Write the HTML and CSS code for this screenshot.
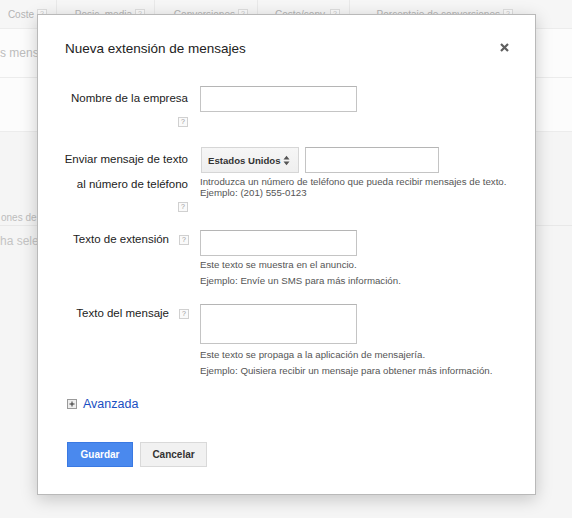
FILE: index.html
```html
<!DOCTYPE html>
<html lang="es">
<head>
<meta charset="utf-8">
<title>Nueva extensión de mensajes</title>
<link rel="stylesheet" href="styles.css">
</head>
<body>
<div class="page">
  <div class="thead">
    <div class="th c1">Coste <span class="q">?</span></div>
    <div class="th c2">Posic. media <span class="q">?</span></div>
    <div class="th c3">Conversiones <span class="q">?</span></div>
    <div class="th c4">Coste/conv. <span class="q">?</span></div>
    <div class="th c5">Porcentaje de conversiones <span class="q">?</span></div>
  </div>
  <div class="trow r1"><span class="bgtext">s mensa</span></div>
  <div class="trow r2"></div>
  <div class="lower">
    <div class="l1">ones de</div>
    <div class="l2">ha sele</div>
  </div>
</div>

<div class="dialog">
  <div class="dlg-head">
    <div class="dlg-title">Nueva extensión de mensajes</div>
    <span class="close"><svg width="9" height="9" viewBox="0 0 9 9"><path d="M1 1L8 8M8 1L1 8" stroke="#5f5f5f" stroke-width="2.2"/></svg></span>
  </div>

  <div class="row row1">
    <div class="label">
      <div class="ltext">Nombre de la empresa</div>
      <span class="hq blockq">?</span>
    </div>
    <div class="field"><div class="input"></div></div>
  </div>

  <div class="row row2">
    <div class="label">
      <div class="ltext">Enviar mensaje de texto<br>al número de teléfono</div>
      <span class="hq blockq">?</span>
    </div>
    <div class="field">
      <div class="phone">
        <div class="select">Estados Unidos <svg width="7" height="11" viewBox="0 0 7 11"><path d="M0.5 4.5L3.5 0.8L6.5 4.5Z M0.5 6.5L3.5 10.2L6.5 6.5Z" fill="#555"/></svg></div>
        <div class="input small"></div>
      </div>
      <div class="help tight">Introduzca un número de teléfono que pueda recibir mensajes de texto.<br>Ejemplo: (201) 555-0123</div>
    </div>
  </div>

  <div class="row row3">
    <div class="label">
      <div class="ltext inline">Texto de extensión <span class="hq">?</span></div>
    </div>
    <div class="field">
      <div class="input"></div>
      <div class="help">Este texto se muestra en el anuncio.<br>Ejemplo: Envíe un SMS para más información.</div>
    </div>
  </div>

  <div class="row row4">
    <div class="label">
      <div class="ltext inline">Texto del mensaje <span class="hq">?</span></div>
    </div>
    <div class="field">
      <div class="input area"></div>
      <div class="help h4">Este texto se propaga a la aplicación de mensajería.<br>Ejemplo: Quisiera recibir un mensaje para obtener más información.</div>
    </div>
  </div>

  <div class="adv">
    <svg width="10" height="10" viewBox="0 0 10 10"><rect x="0.5" y="0.5" width="9" height="9" fill="#eeeeee" stroke="#9a9a9a"/><path d="M2.5 5H7.5M5 2.5V7.5" stroke="#333" stroke-width="1"/></svg>
    <span class="adv-link">Avanzada</span>
  </div>

  <div class="buttons">
    <div class="btn primary">Guardar</div>
    <div class="btn secondary">Cancelar</div>
  </div>
</div>
</body>
</html>
```
FILE: styles.css
```css
* { box-sizing: border-box; }
html, body { margin: 0; padding: 0; }
body {
  font-family: "Liberation Sans", Arial, sans-serif;
  width: 572px;
  height: 518px;
  overflow: hidden;
  position: relative;
  background: #f5f5f5;
}

/* background page (faded under the modal) */
.page { width: 572px; height: 518px; display: flex; flex-direction: column; }
.thead {
  display: flex;
  height: 29px;
  background: #f6f6f6;
  border-bottom: 1px solid #ececec;
}
.th {
  display: flex;
  justify-content: flex-end;
  align-items: center;
  gap: 3px;
  padding-right: 9px;
  border-right: 1px solid #e9e9e9;
  font-size: 10px;
  color: #b4b4b4;
  height: 28px;
  white-space: nowrap;
}
.c1 { width: 57px; }
.c2 { width: 98px; }
.c3 { width: 103px; }
.c4 { width: 92px; }
.c5 { width: 172px; border-right: none; }
.q {
  display: inline-block;
  width: 10px;
  height: 10px;
  border: 1px solid #dedede;
  font-size: 7px;
  line-height: 8px;
  text-align: center;
  color: #c6c6c6;
  background: #fbfbfb;
}
.trow { background: #fcfcfc; border-bottom: 1px solid #ececec; }
.r1 { height: 49px; display: flex; align-items: center; }
.r2 { height: 54px; }
.bgtext { font-size: 12px; color: #bdbdbd; padding-left: 0; white-space: nowrap; }
.lower { flex: 1; background: #f5f5f5; padding-top: 78px; }
.l1 {
  font-size: 10px; line-height: 15px; color: #bcbcbc;
  border-bottom: 1px solid #e8e8e8; padding-left: 1px; white-space: nowrap;
}
.l2 { font-size: 12px; line-height: 16px; color: #c4c4c4; margin-top: 7px; white-space: nowrap; }

/* dialog */
.dialog {
  position: absolute;
  left: 37px;
  top: 14px;
  width: 499px;
  background: #fff;
  border: 1px solid #b9b9b9;
  box-shadow: 0 4px 16px rgba(0, 0, 0, 0.2);
  padding: 24px 26px 27px 27px;
  color: #222;
}
.dlg-head { display: flex; justify-content: space-between; align-items: flex-start; }
.dlg-title { font-size: 13.5px; line-height: 20px; color: #222; }
.close { display: block; width: 9px; height: 9px; margin-top: 4px; }
.close svg { display: block; }

.row {
  display: grid;
  grid-template-columns: 123px 1fr;
  column-gap: 12px;
}
.row1 { margin-top: 27px; }
.row2 { margin-top: 20px; }
.row3 { margin-top: 18px; }
.row4 { margin-top: 15px; }

.label { display: flex; flex-direction: column; align-items: flex-end; text-align: right; }
.ltext { font-size: 11.5px; color: #222; white-space: nowrap; }
.row1 .ltext { line-height: 24px; }
.row2 .ltext { line-height: 25px; }
.ltext.inline { line-height: 19px; display: flex; align-items: center; }
.hq {
  display: inline-block;
  width: 10px;
  height: 10px;
  border: 1px solid #d0d0d0;
  font-size: 7px;
  line-height: 8px;
  text-align: center;
  color: #999;
  background: #fafafa;
}
.ltext.inline .hq { margin-left: 10px; margin-right: -1px; }
.row1 .blockq { margin-top: 7px; }
.row2 .blockq { margin-top: 5px; }

.field { display: flex; flex-direction: column; align-items: flex-start; }
.input {
  width: 157px;
  height: 26px;
  border: 1px solid #c4c4c4;
  border-top-color: #b5b5b5;
  background: #fff;
}
.input.small { width: 134px; }
.input.area { height: 40px; }
.phone { display: flex; gap: 6px; }
.select {
  margin-left: 1px;
  width: 98px;
  height: 26px;
  border: 1px solid #d6d6d6;
  background: linear-gradient(#f6f6f6, #efefef);
  display: flex;
  align-items: center;
  justify-content: space-between;
  padding: 0 8px 0 6px;
  font-size: 9.6px;
  font-weight: bold;
  color: #333;
  white-space: nowrap;
}
.select svg { display: block; }
.help { font-size: 9.7px; line-height: 16px; color: #555; margin-top: 1px; white-space: nowrap; }
.help.tight { line-height: 11px; margin-top: 3px; }
.help.h4 { margin-top: 3px; }

.adv { display: flex; align-items: center; gap: 6px; margin: 16px 0 0 2px; height: 18px; }
.adv svg { display: block; }
.adv-link { font-size: 12.5px; color: #1a4fc2; }

.buttons { display: flex; gap: 7px; margin: 29px 0 0 2px; }
.btn {
  height: 25px;
  display: flex;
  align-items: center;
  justify-content: center;
  font-size: 10px;
  font-weight: bold;
}
.primary {
  width: 66px;
  background: #4a89ee;
  border: 1px solid #3a79e2;
  color: #fff;
}
.secondary {
  width: 67px;
  background: #f1f1f1;
  border: 1px solid #d9d9d9;
  color: #333;
}
```
